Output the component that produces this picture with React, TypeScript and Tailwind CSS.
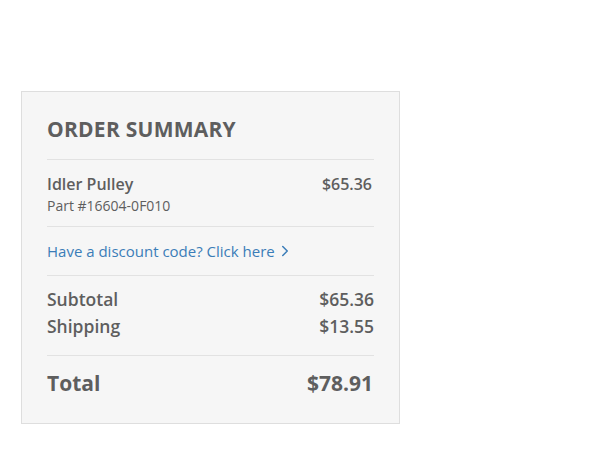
import { ChevronRight } from 'lucide-react';

const App = () => {
  return (
    <div className="min-h-screen bg-white pt-[91px] pl-[21px]" style={{ fontFamily: '"Open Sans", sans-serif' }}>
      <div className="w-[379px] h-[333px] bg-[#f6f6f6] border border-[#dedede] px-[25px] text-[#5e5e5e]">
        {/* Header */}
        <h2 className="pt-[23px] pb-[16px] text-[21px] leading-[28px] font-bold tracking-[0.25px]">ORDER SUMMARY</h2>

        {/* Line item */}
        <div className="border-t border-[#e2e2e2] pt-[13px] pb-[9px] flex justify-between">
          <div>
            <div className="text-[16px] leading-[22px] font-semibold">Idler Pulley</div>
            <div className="text-[14px] leading-[22px]">Part #16604-0F010</div>
          </div>
          <div className="text-[16px] leading-[22px] font-semibold pr-[2px]">$65.36</div>
        </div>

        {/* Discount */}
        <div className="border-t border-[#e2e2e2] pt-[13px] pb-[13px]">
          <a className="text-[15px] leading-[22px] text-[#3b7db8] flex items-center gap-[1px]" href="#">
            Have a discount code? Click here
            <ChevronRight className="w-[18px] h-[18px]" strokeWidth={2} />
          </a>
        </div>

        {/* Totals */}
        <div className="border-t border-[#e2e2e2] pt-[10px] pb-[15px] text-[17.5px] leading-[27px] font-semibold">
          <div className="flex justify-between">
            <span>Subtotal</span>
            <span>$65.36</span>
          </div>
          <div className="flex justify-between">
            <span>Shipping</span>
            <span>$13.55</span>
          </div>
        </div>

        <div className="border-t border-[#e2e2e2] pt-[13px] flex justify-between text-[21px] leading-[28px] font-bold">
          <span>Total</span>
          <span className="pr-[1px]">$78.91</span>
        </div>
      </div>
    </div>
  );
};

export default App;
